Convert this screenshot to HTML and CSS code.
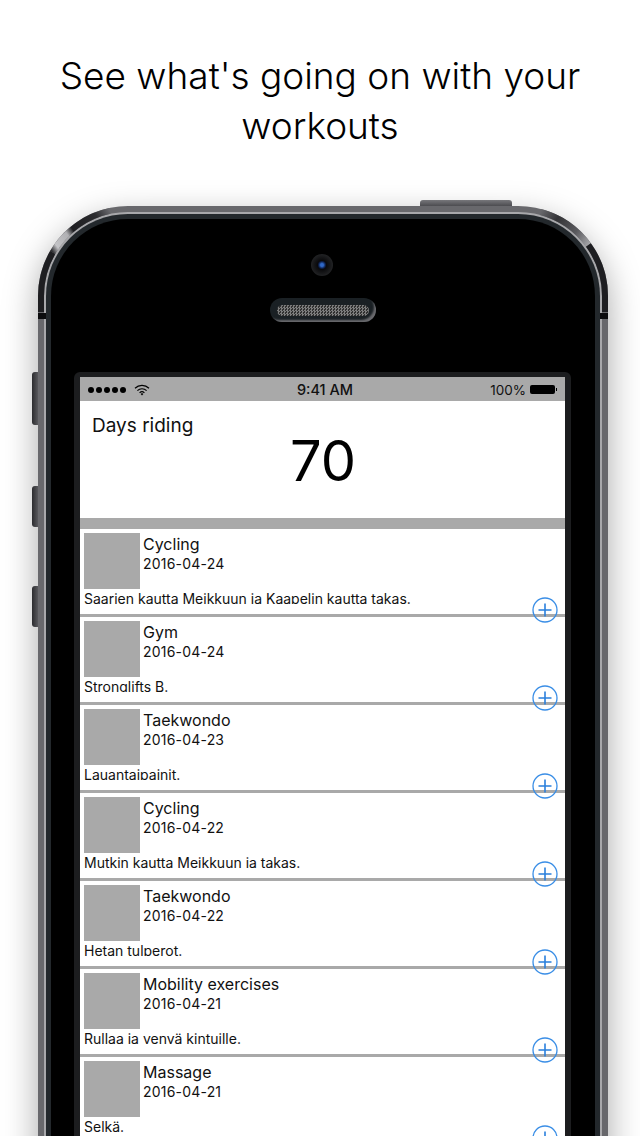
FILE: index.html
```html
<!DOCTYPE html>
<html lang="en">
<head>
    <meta charset="UTF-8">
    <meta name="viewport" content="width=device-width, initial-scale=1.0">
    <title>Workouts</title>
    <link rel="stylesheet" href="styles.css">
</head>
<body>

    <div class="page">
        <h1 class="headline">See what's going on with your<br>workouts</h1>

        <div class="phone">
            <span class="top-button"></span>
            <span class="side-button side-mute"></span>
            <span class="side-button side-up"></span>
            <span class="side-button side-down"></span>
            <span class="antenna antenna-left"></span>
            <span class="antenna antenna-right"></span>

            <div class="rim">
                <div class="bezel">
                    <div class="face">
                        <div class="camera"><span class="lens"></span></div>
                        <div class="speaker"><span class="mesh"></span></div>

                        <div class="screen-frame">
                            <div class="screen">
                                <div class="status-bar">
                                    <div class="status-left">
                                        <span class="signal"><i></i><i></i><i></i><i></i><i></i></span>
                                        <svg class="wifi" width="16" height="12" viewBox="0 0 16 12">
                                            <path d="M1 4.2a10 10 0 0 1 14 0M3.4 6.6a6.6 6.6 0 0 1 9.2 0M5.6 8.8a3.4 3.4 0 0 1 4.8 0" fill="none" stroke="#000" stroke-width="1.2"/>
                                            <path d="M6.7 10l1.3-1.1L9.3 10 8 11.4z" fill="#000"/>
                                        </svg>
                                    </div>
                                    <div class="status-time">9:41 AM</div>
                                    <div class="status-right">
                                        <span>100%</span>
                                        <span class="battery"></span>
                                    </div>
                                </div>

                                <div class="summary">
                                    <div class="summary-label">Days riding</div>
                                    <div class="summary-value">70</div>
                                </div>
                                <div class="band"></div>

                                <div class="row">
                                    <div class="row-top">
                                        <div class="thumb"></div>
                                        <div>
                                            <div class="row-title">Cycling</div>
                                            <div class="row-date">2016-04-24</div>
                                        </div>
                                    </div>
                                    <div class="row-text">Saarien kautta Meikkuun ja Kaapelin kautta takas.</div>
                                    <svg class="add" width="26" height="26" viewBox="0 0 26 26"><circle cx="13" cy="13" r="12" /><path d="M6.5 13h13M13 6.5v13"/></svg>
                                </div>

                                <div class="row">
                                    <div class="row-top">
                                        <div class="thumb"></div>
                                        <div>
                                            <div class="row-title">Gym</div>
                                            <div class="row-date">2016-04-24</div>
                                        </div>
                                    </div>
                                    <div class="row-text">Stronglifts B.</div>
                                    <svg class="add" width="26" height="26" viewBox="0 0 26 26"><circle cx="13" cy="13" r="12" /><path d="M6.5 13h13M13 6.5v13"/></svg>
                                </div>

                                <div class="row">
                                    <div class="row-top">
                                        <div class="thumb"></div>
                                        <div>
                                            <div class="row-title">Taekwondo</div>
                                            <div class="row-date">2016-04-23</div>
                                        </div>
                                    </div>
                                    <div class="row-text">Lauantaipainit.</div>
                                    <svg class="add" width="26" height="26" viewBox="0 0 26 26"><circle cx="13" cy="13" r="12" /><path d="M6.5 13h13M13 6.5v13"/></svg>
                                </div>

                                <div class="row">
                                    <div class="row-top">
                                        <div class="thumb"></div>
                                        <div>
                                            <div class="row-title">Cycling</div>
                                            <div class="row-date">2016-04-22</div>
                                        </div>
                                    </div>
                                    <div class="row-text">Mutkin kautta Meikkuun ja takas.</div>
                                    <svg class="add" width="26" height="26" viewBox="0 0 26 26"><circle cx="13" cy="13" r="12" /><path d="M6.5 13h13M13 6.5v13"/></svg>
                                </div>

                                <div class="row">
                                    <div class="row-top">
                                        <div class="thumb"></div>
                                        <div>
                                            <div class="row-title">Taekwondo</div>
                                            <div class="row-date">2016-04-22</div>
                                        </div>
                                    </div>
                                    <div class="row-text">Hetan tulperot.</div>
                                    <svg class="add" width="26" height="26" viewBox="0 0 26 26"><circle cx="13" cy="13" r="12" /><path d="M6.5 13h13M13 6.5v13"/></svg>
                                </div>

                                <div class="row">
                                    <div class="row-top">
                                        <div class="thumb"></div>
                                        <div>
                                            <div class="row-title">Mobility exercises</div>
                                            <div class="row-date">2016-04-21</div>
                                        </div>
                                    </div>
                                    <div class="row-text">Rullaa ja venvä kintuille.</div>
                                    <svg class="add" width="26" height="26" viewBox="0 0 26 26"><circle cx="13" cy="13" r="12" /><path d="M6.5 13h13M13 6.5v13"/></svg>
                                </div>

                                <div class="row">
                                    <div class="row-top">
                                        <div class="thumb"></div>
                                        <div>
                                            <div class="row-title">Massage</div>
                                            <div class="row-date">2016-04-21</div>
                                        </div>
                                    </div>
                                    <div class="row-text">Selkä.</div>
                                    <svg class="add" width="26" height="26" viewBox="0 0 26 26"><circle cx="13" cy="13" r="12" /><path d="M6.5 13h13M13 6.5v13"/></svg>
                                </div>
                            </div>
                        </div>
                    </div>
                </div>
            </div>

            <!-- corner reflections on the metal edge -->
            <svg class="glints" width="570" height="120" viewBox="0 0 570 120">
                <defs>
                    <linearGradient id="glintLeft" gradientUnits="userSpaceOnUse" x1="14.7" y1="46.5" x2="71.9" y2="4.9">
                        <stop offset="0" stop-color="#2a2a2d"/>
                        <stop offset="0.1" stop-color="#c4c4c7"/>
                        <stop offset="0.32" stop-color="#b0b0b3"/>
                        <stop offset="0.42" stop-color="#1d1d20"/>
                        <stop offset="0.8" stop-color="#2c2c2f"/>
                        <stop offset="1" stop-color="#68686c"/>
                    </linearGradient>
                    <linearGradient id="glintRight" gradientUnits="userSpaceOnUse" x1="502.5" y1="6" x2="550.4" y2="38.9">
                        <stop offset="0" stop-color="#68686c"/>
                        <stop offset="0.3" stop-color="#333336"/>
                        <stop offset="0.7" stop-color="#5a5a5e"/>
                        <stop offset="1" stop-color="#a4a4a7"/>
                    </linearGradient>
                </defs>
                <g fill="none" stroke-width="6">
                    <path d="M3 106V90A87 87 0 0 1 14.7 46.5" stroke="#1e1e21"/>
                    <path d="M14.7 46.5A87 87 0 0 1 71.9 4.9" stroke="url(#glintLeft)"/>
                    <path d="M502.5 6A87 87 0 0 1 550.4 38.9" stroke="url(#glintRight)"/>
                    <path d="M550.4 38.9A87 87 0 0 1 567 90V106" stroke="#1e1e21"/>
                </g>
            </svg>
        </div>
    </div>

</body>
</html>
```

FILE: styles.css
```css
html, body {
    margin: 0;
    padding: 0;
    background-color: white;
}

.page {
    width: 640px;
    height: 1136px;
    overflow: hidden;
    box-sizing: border-box;
    padding-top: 51px;
    font-family: Inter, "Liberation Sans", sans-serif;
    color: #000;
}

.headline {
    margin: 0;
    font-size: 37px;
    font-weight: 300;
    line-height: 50px;
    text-align: center;
}

/* Phone body */
.phone {
    position: relative;
    box-sizing: border-box;
    width: 570px;
    height: 1100px;
    margin: 55px 0 0 38px;
    padding: 6px 6px 0;
    background-color: #68686c;
    border-radius: 90px 90px 0 0;
    box-shadow: 0 12px 34px rgba(0, 0, 0, 0.35);
}

.rim {
    height: 100%;
    padding: 2px 2px 0;
    box-sizing: border-box;
    background-color: #a8a8ab;
    border-radius: 84px 84px 0 0;
}

.bezel {
    height: 100%;
    padding: 5px 5px 0;
    box-sizing: border-box;
    background-color: #23282c;
    border-radius: 82px 82px 0 0;
}

.face {
    height: 100%;
    display: flex;
    flex-direction: column;
    align-items: center;
    background-color: #000;
    border-radius: 77px 77px 0 0;
}

.top-button {
    position: absolute;
    top: -6px;
    left: 382px;
    width: 92px;
    height: 6px;
    background: linear-gradient(#77777b, #4c4c50);
    border-radius: 3px 3px 0 0;
}

.side-button {
    position: absolute;
    left: -6px;
    width: 6px;
    background: linear-gradient(90deg, #2c2c2f, #58585c);
    border-radius: 3px 0 0 3px;
}

.side-mute { top: 166px; height: 53px; }
.side-up { top: 280px; height: 41px; }
.side-down { top: 380px; height: 41px; }

.antenna {
    position: absolute;
    top: 107px;
    width: 8px;
    height: 6px;
    background-color: #0c0c0e;
}

.antenna-left { left: 0; }
.antenna-right { right: 0; }

.glints {
    position: absolute;
    top: 0;
    left: 0;
}

.camera {
    flex: none;
    display: flex;
    align-items: center;
    justify-content: center;
    width: 22px;
    height: 22px;
    margin: 35px 2px 0 0;
    background: radial-gradient(#0a0a0c 30%, #242527 75%);
    border-radius: 50%;
}

.lens {
    width: 8px;
    height: 8px;
    background: radial-gradient(#2f68c8 25%, #0d1f4a 60%, #05070f);
    border-radius: 50%;
}

.speaker {
    flex: none;
    display: flex;
    align-items: center;
    justify-content: center;
    width: 106px;
    height: 24px;
    margin-top: 22px;
    background-color: #1a2024;
    border-radius: 12px;
    box-shadow: inset -3px -3px 2px -1px #6a6a6e;
}

.mesh {
    width: 92px;
    height: 11px;
    border-radius: 6px;
    background: repeating-conic-gradient(#7c7c7c 0 25%, #303030 0 50%) 0 0 / 3px 3px;
}

/* Screen */
.screen-frame {
    flex: 1;
    box-sizing: border-box;
    width: 497px;
    margin: 50px 1px 0 0;
    padding: 5px 6px 0;
    background-color: #1c1d1f;
    border-radius: 6px 6px 0 0;
}

.screen {
    height: 100%;
    background-color: white;
}

.status-bar {
    display: grid;
    grid-template-columns: 1fr auto 1fr;
    align-items: center;
    height: 24px;
    padding: 1px 8px 0 8px;
    box-sizing: border-box;
    background-color: #a9a9a9;
    font-size: 13.5px;
    color: #111;
}

.status-left {
    display: flex;
    align-items: center;
    gap: 8px;
}

.signal {
    display: flex;
    gap: 2px;
}

.signal i {
    width: 6px;
    height: 6px;
    background-color: #000;
    border-radius: 50%;
}

.status-time {
    font-size: 14.5px;
    font-weight: 500;
    margin-left: 5px;
}

.status-right {
    display: flex;
    align-items: center;
    justify-content: flex-end;
    gap: 4px;
}

.battery {
    position: relative;
    width: 25px;
    height: 9px;
    background-color: #000;
    border-radius: 2px;
    margin-right: 2px;
}

.battery::after {
    content: "";
    position: absolute;
    top: 3px;
    right: -2px;
    width: 1px;
    height: 3px;
    background-color: #000;
}

.summary {
    height: 117px;
    box-sizing: border-box;
    padding-top: 13px;
}

.summary-label {
    margin-left: 12px;
    font-size: 19px;
    line-height: 24px;
    color: #111;
}

.summary-value {
    margin-top: -11px;
    padding-left: 1px;
    font-size: 56px;
    line-height: 68px;
    text-align: center;
}

.band {
    height: 11px;
    background-color: #a9a9a9;
}

/* Workout rows */
.row {
    position: relative;
    box-sizing: border-box;
    height: 88px;
    padding: 4px 0 0 4px;
    border-bottom: 3px solid #a9a9a9;
}

.row-top {
    display: flex;
    gap: 3px;
}

.thumb {
    flex: none;
    width: 56px;
    height: 56px;
    background-color: #a9a9a9;
}

.row-title {
    font-size: 16px;
    line-height: 20px;
    margin-top: 1px;
    color: #111;
}

.row-date {
    font-size: 14px;
    letter-spacing: 0.2px;
    line-height: 18px;
    margin-top: 1px;
    color: #111;
}

.row-text {
    height: 14px;
    margin-top: 1px;
    overflow: hidden;
    font-size: 14px;
    line-height: 17px;
    color: #111;
}

.add {
    position: absolute;
    top: 68px;
    right: 7px;
    z-index: 1;
}

.add circle {
    fill: none;
    stroke: #3a8ee6;
    stroke-width: 1.3;
}

.add path {
    fill: none;
    stroke: #2a7fdc;
    stroke-width: 1.6;
}
```
